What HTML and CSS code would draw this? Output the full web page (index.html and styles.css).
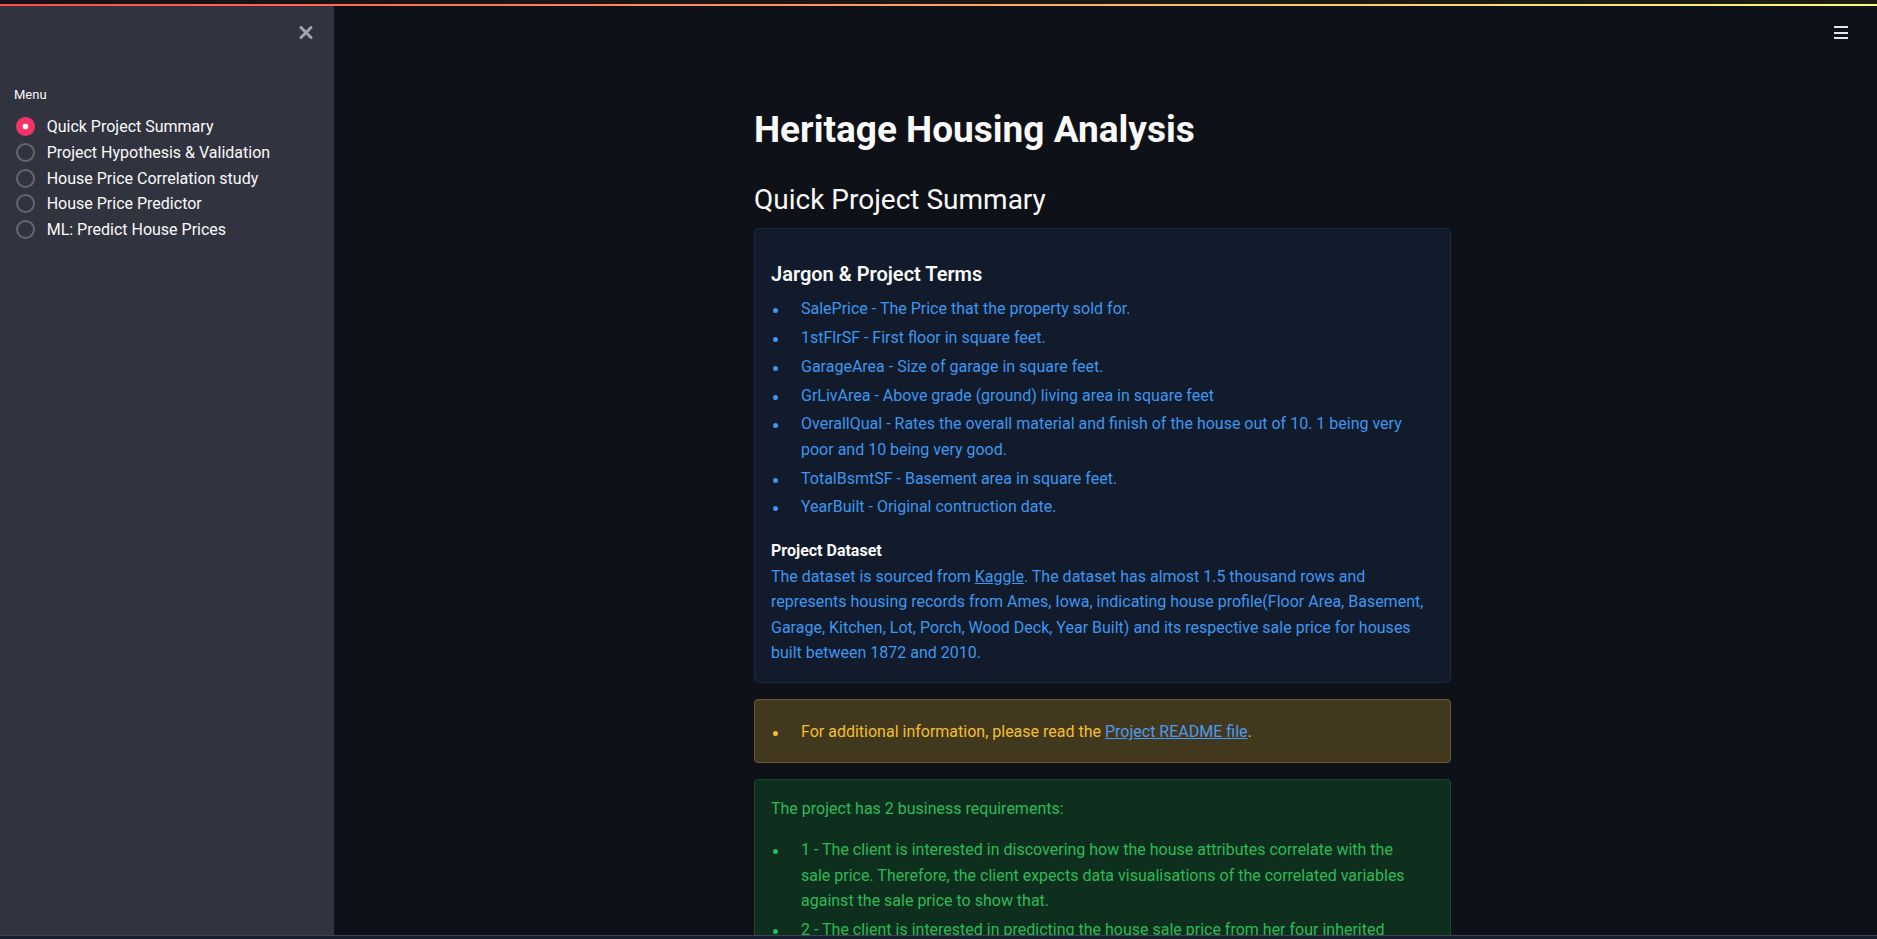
FILE: index.html
```html
<!DOCTYPE html>
<html lang="en">
<head>
<meta charset="utf-8">
<title>Heritage Housing Analysis</title>
<link rel="stylesheet" href="styles.css">
</head>
<body>
<div class="app">
  <div class="top-strip"><div class="decoration"></div></div>
  <div class="shell">
    <aside class="sidebar">
      <div class="sidebar-head">
        <button class="close-btn" aria-label="Close sidebar">
          <svg width="14" height="13" viewBox="0 0 14 13"><path d="M2 1.5 L12 11.5 M12 1.5 L2 11.5" stroke="#a3a4ab" stroke-width="3" stroke-linecap="round"/></svg>
        </button>
      </div>
      <div class="sidebar-body">
        <div class="menu-label">Menu</div>
        <div class="radio-group">
          <label class="radio checked"><span class="radio-dot"></span><span class="radio-text">Quick Project Summary</span></label>
          <label class="radio"><span class="radio-dot"></span><span class="radio-text">Project Hypothesis &amp; Validation</span></label>
          <label class="radio"><span class="radio-dot"></span><span class="radio-text">House Price Correlation study</span></label>
          <label class="radio"><span class="radio-dot"></span><span class="radio-text">House Price Predictor</span></label>
          <label class="radio"><span class="radio-dot"></span><span class="radio-text">ML: Predict House Prices</span></label>
        </div>
      </div>
    </aside>
    <main class="main">
      <header class="main-head">
        <button class="menu-btn" aria-label="Main menu">
          <svg width="14" height="13" viewBox="0 0 14 13"><rect x="0" y="0" width="14" height="2" fill="#e6e6e8"/><rect x="0" y="6" width="14" height="2" fill="#e6e6e8"/><rect x="0" y="11" width="14" height="2" fill="#e6e6e8"/></svg>
        </button>
      </header>
      <div class="block">
        <h1 class="title">Heritage Housing Analysis</h1>
        <h2 class="subheader">Quick Project Summary</h2>

        <div class="alert alert-info">
          <h4 class="alert-heading">Jargon &amp; Project Terms</h4>
          <ul class="bullets">
            <li><span>SalePrice - The Price that the property sold for.</span></li>
            <li><span>1stFlrSF - First floor in square feet.</span></li>
            <li><span>GarageArea - Size of garage in square feet.</span></li>
            <li><span>GrLivArea - Above grade (ground) living area in square feet</span></li>
            <li><span>OverallQual - Rates the overall material and finish of the house out of 10. 1 being very poor and 10 being very good.</span></li>
            <li><span>TotalBsmtSF - Basement area in square feet.</span></li>
            <li><span>YearBuilt - Original contruction date.</span></li>
          </ul>
          <p class="para"><strong class="strong">Project Dataset</strong><br>The dataset is sourced from <a class="link-inherit" href="#">Kaggle</a>. The dataset has almost 1.5 thousand rows and represents housing records from Ames, Iowa, indicating house profile(Floor Area, Basement, Garage, Kitchen, Lot, Porch, Wood Deck, Year Built) and its respective sale price for houses built between 1872 and 2010.</p>
        </div>

        <div class="alert alert-warning">
          <ul class="bullets bullets-tight">
            <li><span>For additional information, please read the <a class="link-blue" href="#">Project README file</a>.</span></li>
          </ul>
        </div>

        <div class="alert alert-success">
          <p class="para para-gap">The project has 2 business requirements:</p>
          <ul class="bullets">
            <li><span>1 - The client is interested in discovering how the house attributes correlate with the<br>sale price. Therefore, the client expects data visualisations of the correlated variables against the sale price to show that.</span></li>
            <li><span>2 - The client is interested in predicting the house sale price from her four inherited houses and any other house in Ames, Iowa.</span></li>
          </ul>
        </div>
      </div>
    </main>
  </div>
  <div class="bottom-strip"></div>
</div>
</body>
</html>
```

FILE: styles.css
```css
* { box-sizing: border-box; }

html, body {
  margin: 0;
  padding: 0;
  height: 100%;
  overflow: hidden;
  background: #0e1117;
}

body {
  font-family: Roboto, "Liberation Sans", sans-serif;
  color: #fafafa;
  font-size: 16px;
}

.app {
  height: 100vh;
  display: flex;
  flex-direction: column;
}

.top-strip {
  height: 6px;
  flex: none;
  display: flex;
  flex-direction: column;
  justify-content: flex-end;
  background: linear-gradient(90deg, #161219, #1b1d10);
}

.decoration {
  height: 2px;
  background: linear-gradient(90deg, #ff4b4b, #fffd80);
}

.shell {
  flex: 1;
  min-height: 0;
  display: flex;
  overflow: hidden;
}

.bottom-strip {
  height: 4px;
  flex: none;
  border-top: 1px solid #3b4252;
  background: #18202f;
}

/* Sidebar */
.sidebar {
  width: 334px;
  flex: none;
  background: #31333f;
}

.sidebar-head {
  height: 52px;
  display: flex;
  justify-content: flex-end;
  align-items: center;
  padding-right: 21px;
}

.close-btn, .menu-btn {
  background: none;
  border: 0;
  padding: 0;
  display: flex;
  cursor: pointer;
}

.sidebar-body {
  padding: 0 16px 0 14px;
}

.menu-label {
  margin-top: 27px;
  font-size: 13px;
  line-height: 20px;
  color: #fafafa;
}

.radio-group {
  margin-top: 9px;
  display: flex;
  flex-direction: column;
}

.radio {
  display: flex;
  align-items: center;
  height: 25.7px;
  font-size: 16px;
  color: #fafafa;
  cursor: pointer;
}

.radio-dot {
  width: 19px;
  height: 19px;
  flex: none;
  border-radius: 50%;
  border: 2px solid #65666f;
  margin: 0 11.7px 0 2px;
}

.radio.checked .radio-dot {
  border-color: #f63366;
  background: radial-gradient(circle, #ffffff 0 2.6px, #f63366 3.2px);
}

/* Main */
.main {
  flex: 1;
  min-width: 0;
  padding-right: 6px;
  overflow: hidden;
}

.main-head {
  height: 53px;
  display: flex;
  justify-content: flex-end;
  align-items: center;
  padding-right: 23px;
}

.block {
  width: 697px;
  margin: 0 auto;
  padding-top: 49px;
}

.title {
  margin: 0;
  font-size: 37px;
  line-height: 43px;
  font-weight: 700;
  color: #fafafa;
}

.subheader {
  margin: 32px 0 0;
  font-size: 28px;
  line-height: 34px;
  font-weight: 400;
  color: #fafafa;
}

.alert {
  border: 1px solid;
  border-radius: 4px;
  padding: 16px;
  font-size: 16px;
  line-height: 25.6px;
  margin-top: 16px;
}

.subheader + .alert { margin-top: 11px; }

.alert-info {
  background: #111b2b;
  border-color: #1b283c;
  color: #3d97ef;
}

.alert-warning {
  background: #41381d;
  border-color: #6b5b2c;
  color: #f3bf2f;
}

.alert-success {
  background: #0f2f1e;
  border-color: #1a4a2b;
  color: #2bbb56;
}

.alert-heading {
  margin: 0;
  padding: 17px 0 7px;
  font-size: 20px;
  line-height: 24px;
  font-weight: 600;
  color: #fafafa;
}

.bullets {
  list-style: none;
  margin: 0 0 18px;
  padding: 0 0 0 1px;
}

.bullets li {
  display: flex;
  margin: 3.2px 0;
}

.bullets li::before {
  content: "";
  width: 5px;
  height: 5px;
  flex: none;
  border-radius: 50%;
  background: currentColor;
  margin: 12px 23px 0 1px;
}

.bullets li > span { flex: 1; min-width: 0; }

.bullets-tight { margin: 3px 0 1px; }
.bullets-tight li { margin: 0; }

.para { margin: 0; }
.para-gap { margin-bottom: 16px; }

.strong {
  color: #fafafa;
  font-weight: 700;
}

.link-inherit {
  color: inherit;
  text-decoration: underline;
}

.link-blue {
  color: #4d9bef;
  text-decoration: underline;
}
```
